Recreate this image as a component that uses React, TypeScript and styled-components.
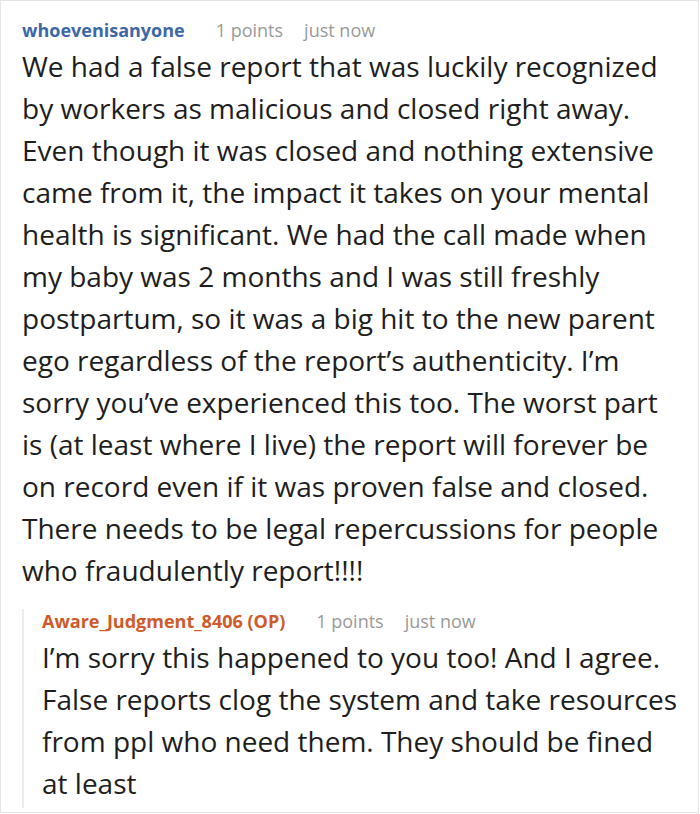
import React from "react";
import styled, { createGlobalStyle } from "styled-components";

const Global = createGlobalStyle`
  html, body { margin: 0; padding: 0; background: #fff; }
  body { font-family: "Open Sans", "Noto Sans", sans-serif; }
`;

const Card = styled.div`
  box-sizing: border-box;
  width: 699px;
  height: 813px;
  border: 1px solid #e4e4e4;
  background: #fff;
  padding: 17px 15px 0 21px;
  overflow: hidden;
`;

const Meta = styled.div`
  display: flex;
  align-items: baseline;
  font-size: 18px;
  line-height: 24px;
`;

const Author = styled.span<{ $op?: boolean }>`
  font-weight: 700;
  color: ${(p) => (p.$op ? "#cf5a2a" : "#3d68a8")};
  margin-right: 31px;
`;

const Info = styled.span`
  color: #9a9a9a;
  margin-right: 21px;
`;

const Body = styled.p`
  margin: 3px 0 0;
  font-size: 28px;
  line-height: 42px;
  color: #1e1e1e;
`;

const Reply = styled.div`
  margin-top: 18px;
  border-left: 2px solid #ececec;
  padding-left: 18px;
  padding-bottom: 4px;
`;

export default function App() {
  return (
    <>
      <Global />
      <Card>
        <Meta>
          <Author>whoevenisanyone</Author>
          <Info>1 points</Info>
          <Info>just now</Info>
        </Meta>
        <Body>
          We had a false report that was luckily recognized by workers as malicious and closed right away. Even though it was closed and nothing extensive came from it, the impact it takes on your mental health is significant. We had the call made when my baby was 2 months and I was still freshly postpartum, so it was a big hit to the new parent ego regardless of the report’s authenticity. I’m sorry you’ve experienced this too. The worst part is (at least where I live) the report will forever be on record even if it was proven false and closed. There needs to be legal repercussions for people who fraudulently report!!!!
        </Body>
        <Reply>
          <Meta>
            <Author $op>Aware_Judgment_8406 (OP)</Author>
            <Info>1 points</Info>
            <Info>just now</Info>
          </Meta>
          <Body>
            I’m sorry this happened to you too! And I agree. False reports clog the system and take resources from ppl who need them. They should be fined at least
          </Body>
        </Reply>
      </Card>
    </>
  );
}
